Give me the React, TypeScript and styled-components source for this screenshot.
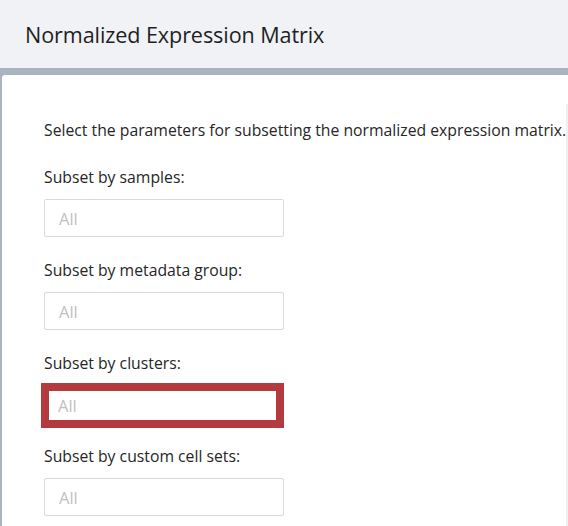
import React from "react";
import styled, { createGlobalStyle } from "styled-components";

const Global = createGlobalStyle`
  html, body { margin: 0; padding: 0; background: #ffffff; }
  body { font-family: "Open Sans", "Noto Sans", sans-serif; overflow: hidden; }
`;

const Page = styled.div`
  width: 568px;
  height: 526px;
  display: flex;
  flex-direction: column;
  background: #f0f2f5;
`;

const Header = styled.header`
  height: 68px;
  flex: none;
  display: flex;
  align-items: center;
  padding-left: 25px;
  box-sizing: border-box;
`;

const Title = styled.h1`
  margin: 0;
  font-size: 21.6px;
  font-weight: 500;
  color: #1f1f1f;
  letter-spacing: -0.1px;
`;

const Frame = styled.div`
  flex: 1;
  background: #aab4c0;
  padding: 7px 0 0 2px;
  display: flex;
  min-height: 0;
`;

const Panel = styled.main`
  flex: 1;
  background: #ffffff;
  border-top-left-radius: 3px;
  padding: 29px 0 0 0;
  display: flex;
  min-height: 0;
`;

const Content = styled.div`
  flex: 1;
  border-right: 2px solid #f0f0f0;
  padding: 14px 0 0 42px;
  display: flex;
  flex-direction: column;
  align-items: flex-start;
`;

const Intro = styled.p`
  margin: 0 0 23px 0;
  font-size: 15.75px;
  line-height: 24px;
  color: #262626;
  white-space: nowrap;
`;

const Field = styled.div`
  display: flex;
  flex-direction: column;
  align-items: flex-start;
  gap: 10px;
  margin-bottom: 21px;
`;

const Label = styled.label`
  font-size: 15.75px;
  line-height: 24px;
  color: #262626;
`;

const Select = styled.div<{ $highlight?: boolean }>`
  box-sizing: border-box;
  display: flex;
  align-items: center;
  background: #ffffff;
  width: ${(p) => (p.$highlight ? "243px" : "240px")};
  height: ${(p) => (p.$highlight ? "45px" : "38px")};
  margin: ${(p) => (p.$highlight ? "-2px 0 -5px -3px" : "0")};
  padding-left: ${(p) => (p.$highlight ? "9px" : "14px")};
  border: ${(p) => (p.$highlight ? "8px solid #b33b3d" : "1px solid #d9d9d9")};
  border-radius: ${(p) => (p.$highlight ? "0" : "2px")};
  font-size: 16.5px;
  color: #bfbfbf;
`;

const fields = [
  { label: "Subset by samples:", highlight: false },
  { label: "Subset by metadata group:", highlight: false },
  { label: "Subset by clusters:", highlight: true },
  { label: "Subset by custom cell sets:", highlight: false },
];

export default function App() {
  return (
    <Page>
      <Global />
      <Header>
        <Title>Normalized Expression Matrix</Title>
      </Header>
      <Frame>
        <Panel>
          <Content>
            <Intro>Select the parameters for subsetting the normalized expression matrix.</Intro>
            {fields.map((f) => (
              <Field key={f.label}>
                <Label>{f.label}</Label>
                <Select $highlight={f.highlight}>All</Select>
              </Field>
            ))}
          </Content>
        </Panel>
      </Frame>
    </Page>
  );
}
